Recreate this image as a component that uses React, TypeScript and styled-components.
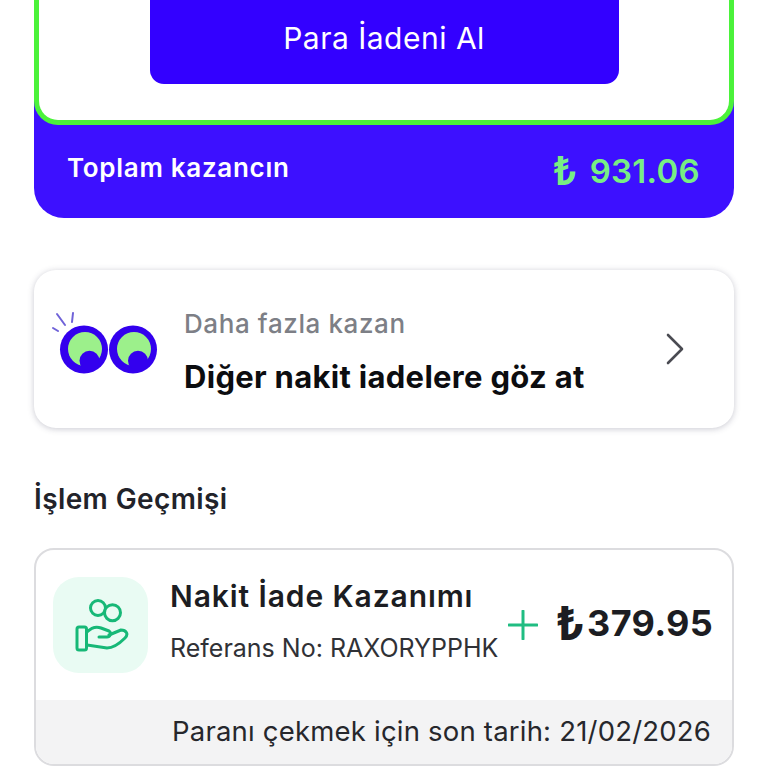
import React, { FC } from 'react'
import styled, { createGlobalStyle } from 'styled-components'

const GlobalStyle = createGlobalStyle`
  html, body {
    margin: 0;
    padding: 0;
    height: 768px;
    overflow: hidden;
    background: #fff;
    font-family: Inter, "Open Sans", "DejaVu Sans", sans-serif;
    color: #16171c;
  }
`

const Page = styled.div`
  width: 700px;
  margin: -40px auto 0;
  display: flex;
  flex-direction: column;
`

const EarningsCard = styled.section`
  background: #3d10ff;
  border-radius: 0 0 30px 30px;
`

const RefundPanel = styled.div`
  box-sizing: border-box;
  height: 165px;
  background: #fff;
  border: 5px solid #4bf23a;
  border-top: 0;
  border-radius: 0 0 24px 24px;
  display: flex;
  justify-content: center;
`

const RefundButton = styled.button`
  width: 469px;
  height: 124px;
  padding: 32px 0 0;
  border: 0;
  border-radius: 0 0 14px 14px;
  background: #3300ff;
  color: #fff;
  font-family: inherit;
  font-size: 30px;
  font-weight: 400;
  letter-spacing: 0.5px;
`

const TotalRow = styled.div`
  height: 93px;
  box-sizing: border-box;
  padding: 0 34px 6px 33px;
  display: flex;
  align-items: center;
  justify-content: space-between;
`

const TotalLabel = styled.span`
  color: #fff;
  font-size: 26px;
  font-weight: 600;
  letter-spacing: 0.7px;
  margin-bottom: 2px;
`

const TotalValue = styled.span`
  display: flex;
  align-items: center;
  gap: 12px;
  color: #78ee83;
  font-size: 33px;
  font-weight: 600;
  letter-spacing: 0.3px;
  padding-top: 4px;
`

const Lira = styled.span<{ $size: number }>`
  font-size: ${p => p.$size}px;
  line-height: 1;
`

const PromoCard = styled.a`
  box-sizing: border-box;
  height: 158px;
  margin-top: 52px;
  padding: 0 48px 0 17px;
  background: #fff;
  border-radius: 22px;
  box-shadow: 0 1px 6px rgba(60, 60, 90, 0.28);
  display: flex;
  align-items: center;
`

const EyesIcon = styled.svg`
  width: 112px;
  height: 72px;
  flex: none;
  margin-top: -6px;
`

const PromoText = styled.div`
  margin: 4px 0 0 21px;
  flex: 1;
  display: flex;
  flex-direction: column;
  gap: 19px;
`

const PromoHint = styled.span`
  color: #7d7f86;
  font-size: 26px;
  font-weight: 500;
  letter-spacing: 0.6px;
`

const PromoTitle = styled.span`
  color: #0c0d10;
  font-size: 31px;
  font-weight: 700;
  letter-spacing: 0.3px;
`

const SectionTitle = styled.h2`
  margin: 55px 0 33px;
  font-size: 28px;
  line-height: 32px;
  font-weight: 600;
  letter-spacing: 0.4px;
  color: #22232a;
`

const HistoryCard = styled.article`
  height: 218px;
  box-sizing: border-box;
  border: 2px solid #dcdcdf;
  border-radius: 20px;
  overflow: hidden;
  display: flex;
  flex-direction: column;
`

const HistoryBody = styled.div`
  flex: 1;
  padding: 0 19px 0 17px;
  display: flex;
  align-items: center;
`

const IconTile = styled.div`
  width: 95px;
  height: 96px;
  flex: none;
  border-radius: 26px;
  background: #e9fbf3;
  display: flex;
  align-items: center;
  justify-content: center;
`

const HistoryText = styled.div`
  margin: 0 0 9px 22px;
  display: flex;
  flex-direction: column;
  gap: 20px;
`

const HistoryTitle = styled.span`
  font-size: 30px;
  line-height: 34px;
  font-weight: 600;
  letter-spacing: 0.9px;
  color: #1c1d22;
`

const Reference = styled.span`
  font-size: 25px;
  line-height: 30px;
  color: #303136;
  white-space: nowrap;
`

const Amount = styled.div`
  margin-left: auto;
  display: flex;
  align-items: center;
  gap: 17px;
  font-size: 36px;
  font-weight: 700;
  letter-spacing: 0.3px;
  color: #1c1d22;
`

const AmountText = styled.span`
  display: flex;
  align-items: center;
  gap: 2px;
  margin-top: -4px;
`

const PlusIcon = styled.svg`
  width: 30px;
  height: 30px;
`

const Deadline = styled.div`
  height: 64px;
  box-sizing: border-box;
  padding: 0 21px 3px 0;
  background: #f3f3f4;
  display: flex;
  align-items: center;
  justify-content: flex-end;
  font-size: 27.5px;
  letter-spacing: 0.2px;
  color: #26272c;
`

const Eyes: FC = () => (
  <EyesIcon viewBox="0 0 112 72">
    <g stroke="#6f62d8" strokeWidth="2" strokeLinecap="round">
      <path d="M6 4 L14 15" />
      <path d="M22 3 L21 12" />
      <path d="M2 18 L7 21" />
    </g>
    <circle cx="33" cy="39.5" r="24" fill="#3300ee" />
    <circle cx="82" cy="39.5" r="24" fill="#3300ee" />
    <circle cx="34" cy="39" r="17" fill="#9cf08b" />
    <circle cx="83" cy="39" r="17" fill="#9cf08b" />
    <circle cx="38.5" cy="50.7" r="10" fill="#3300ee" />
    <circle cx="87" cy="50.7" r="10" fill="#3300ee" />
  </EyesIcon>
)

const HandCoins: FC = () => (
  <svg width="56" height="56" viewBox="0 0 56 56" fill="none" stroke="#17b877" strokeWidth="3" strokeLinecap="round" strokeLinejoin="round">
    <circle cx="25" cy="11" r="7.5" />
    <circle cx="39.5" cy="15.7" r="8" fill="#e9fbf3" />
    <rect x="4" y="30" width="9.5" height="23" rx="2" />
    <path d="M14 35 C18 31 23 29 28 31 L36 34 C39 36 37 40 34 40 L26 40" />
    <path d="M36 38 L48 33 C53 33 56 37 52 41 C46 47 40 51 34 51 L14 48" />
  </svg>
)

const App: FC = () => (
  <>
    <GlobalStyle />
    <Page>
      <EarningsCard>
        <RefundPanel>
          <RefundButton>Para İadeni Al</RefundButton>
        </RefundPanel>
        <TotalRow>
          <TotalLabel>Toplam kazancın</TotalLabel>
          <TotalValue>
            <Lira $size={40}>₺</Lira>
            931.06
          </TotalValue>
        </TotalRow>
      </EarningsCard>

      <PromoCard>
        <Eyes />
        <PromoText>
          <PromoHint>Daha fazla kazan</PromoHint>
          <PromoTitle>Diğer nakit iadelere göz at</PromoTitle>
        </PromoText>
        <svg width="22" height="34" viewBox="0 0 22 34" fill="none" stroke="#4a4b52" strokeWidth="2.6" strokeLinecap="round" strokeLinejoin="round">
          <path d="M4 3 L18 17 L4 31" />
        </svg>
      </PromoCard>

      <SectionTitle>İşlem Geçmişi</SectionTitle>

      <HistoryCard>
        <HistoryBody>
          <IconTile>
            <HandCoins />
          </IconTile>
          <HistoryText>
            <HistoryTitle>Nakit İade Kazanımı</HistoryTitle>
            <Reference>Referans No: RAXORYPPHK</Reference>
          </HistoryText>
          <Amount>
            <PlusIcon viewBox="0 0 30 30" stroke="#20bd82" strokeWidth="3" strokeLinecap="round">
              <path d="M1 15 H29 M15 1 V29" />
            </PlusIcon>
            <AmountText>
              <Lira $size={46}>₺</Lira>
              379.95
            </AmountText>
          </Amount>
        </HistoryBody>
        <Deadline>Paranı çekmek için son tarih: 21/02/2026</Deadline>
      </HistoryCard>
    </Page>
  </>
)

export default App
